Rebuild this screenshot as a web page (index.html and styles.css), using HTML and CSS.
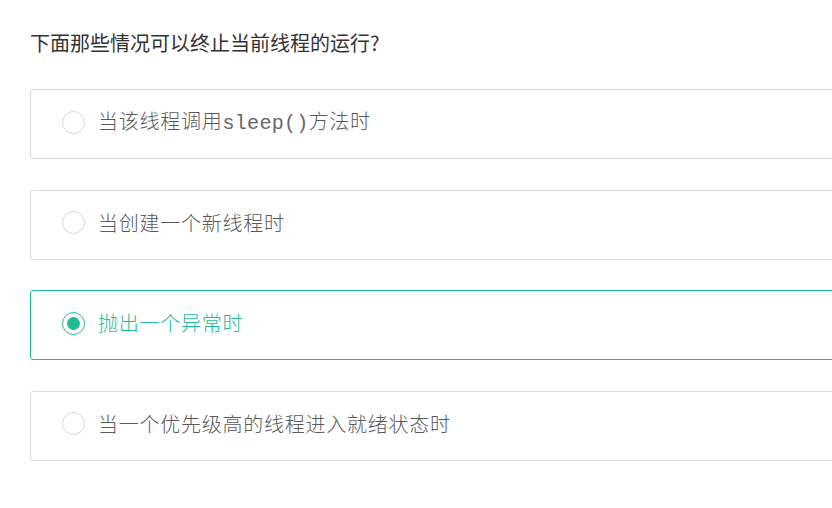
FILE: index.html
```html
<!DOCTYPE html>
<html lang="zh-CN">
<head>
<meta charset="utf-8">
<link rel="stylesheet" href="styles.css">
</head>
<body>
<div class="quiz">
  <h1 class="question">下面那些情况可以终止当前线程的运行?</h1>
  <ul class="options">
    <li class="option"><span class="radio"></span><span class="label">当该线程调用<code class="code">sleep()</code>方法时</span></li>
    <li class="option"><span class="radio"></span><span class="label">当创建一个新线程时</span></li>
    <li class="option selected"><span class="radio"></span><span class="label">抛出一个异常时</span></li>
    <li class="option"><span class="radio"></span><span class="label">当一个优先级高的线程进入就绪状态时</span></li>
  </ul>
</div>
</body>
</html>
```

FILE: styles.css
```css
html, body {
  margin: 0;
  padding: 0;
  background: #fff;
  overflow: hidden;
}
.quiz {
  width: 880px;
  padding: 30px 0 0 30px;
  font-family: "Noto Sans CJK SC", "Noto Sans", sans-serif;
}
.question {
  margin: 0;
  font-size: 20px;
  font-weight: 400;
  line-height: 26px;
  color: #333;
}
.options {
  list-style: none;
  margin: 33px 0 0 0;
  padding: 0;
}
.option {
  box-sizing: border-box;
  height: 70px;
  margin-bottom: 30.67px;
  border: 1px solid #dcdcdc;
  border-radius: 3px;
  display: flex;
  align-items: center;
  padding-left: 31px;
  padding-bottom: 4px;
  color: #5a5a5a;
}
.radio {
  box-sizing: border-box;
  width: 23px;
  height: 23px;
  border: 1px solid #d6d6d6;
  border-radius: 50%;
  flex: none;
  display: flex;
  align-items: center;
  justify-content: center;
  margin-right: 13px;
}
.label {
  font-family: "Noto Sans CJK SC", sans-serif;
  font-weight: 300;
  font-size: 20px;
  letter-spacing: 0.75px;
  line-height: 26px;
}
.code {
  font-family: "Liberation Mono", monospace;
  font-size: 20px;
  letter-spacing: 0.3px;
  color: #666;
}
.selected {
  border-color: #22b996;
  color: #22b996;
}
.selected .radio {
  border-color: #22b996;
}
.selected .radio::after {
  content: "";
  width: 13px;
  height: 13px;
  border-radius: 50%;
  background: #22b996;
}
```
